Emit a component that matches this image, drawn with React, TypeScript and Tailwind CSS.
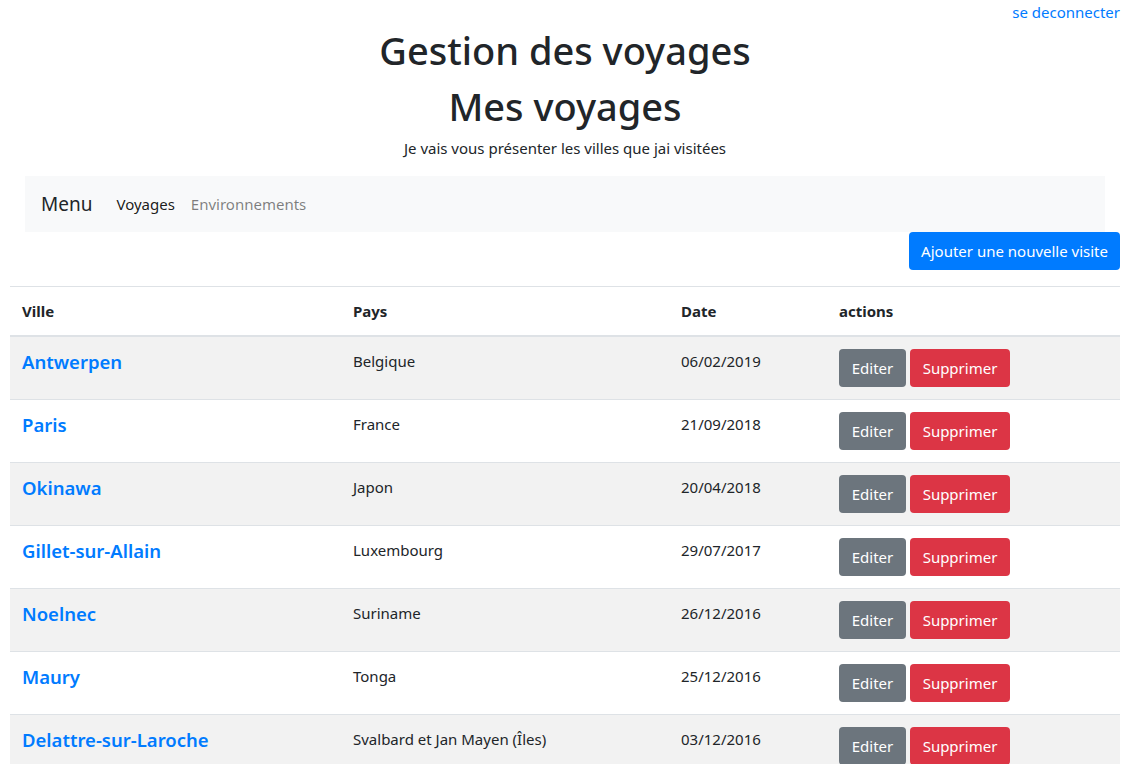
const voyages = [
  { ville: 'Antwerpen', pays: 'Belgique', date: '06/02/2019' },
  { ville: 'Paris', pays: 'France', date: '21/09/2018' },
  { ville: 'Okinawa', pays: 'Japon', date: '20/04/2018' },
  { ville: 'Gillet-sur-Allain', pays: 'Luxembourg', date: '29/07/2017' },
  { ville: 'Noelnec', pays: 'Suriname', date: '26/12/2016' },
  { ville: 'Maury', pays: 'Tonga', date: '25/12/2016' },
  { ville: 'Delattre-sur-Laroche', pays: 'Svalbard et Jan Mayen (Îles)', date: '03/12/2016' },
];

export default function App() {
  return (
    <div className="min-h-screen bg-white pl-[10px] pr-[14px] text-[#212529] font-['Noto_Sans','Open_Sans',sans-serif] text-[15px] leading-6">
      <div className="text-right">
        <a href="#" className="text-[#007bff] text-[15px]">se deconnecter</a>
      </div>
      <h1 className="text-center text-[38px] font-medium leading-[48px] mb-2 pt-[2px] h-[48px]">Gestion des voyages</h1>
      <h1 className="text-center text-[38px] font-medium leading-[48px] mb-2 pt-[2px] h-[48px]">Mes voyages</h1>
      <p className="text-center text-[15px] leading-6 mb-4">Je vais vous présenter les villes que jai visitées</p>

      <nav className="mx-[15px] h-14 bg-[#f8f9fa] flex items-center px-4">
        <span className="text-[19px] mr-6">Menu</span>
        <a href="#" className="text-[15px] text-black/90 mr-4">Voyages</a>
        <a href="#" className="text-[15px] text-black/50">Environnements</a>
      </nav>

      <div className="flex justify-end">
        <button className="h-[38px] px-3 rounded bg-[#007bff] text-white text-[15px]">Ajouter une nouvelle visite</button>
      </div>

      <table className="w-full mt-4 border-collapse text-left">
        <thead>
          <tr className="border-t border-[#dee2e6] border-b-2">
            <th className="w-[331px] px-3 py-3 font-bold text-[15px]">Ville</th>
            <th className="w-[328px] px-3 py-3 font-bold text-[15px]">Pays</th>
            <th className="w-[158px] px-3 py-3 font-bold text-[15px]">Date</th>
            <th className="px-3 py-3 font-bold text-[15px]">actions</th>
          </tr>
        </thead>
        <tbody>
          {voyages.map((v, i) => (
            <tr key={v.ville} className={`border-t border-[#dee2e6] ${i % 2 === 0 ? 'bg-[#f2f2f2]' : 'bg-white'}`}>
              <td className="px-3 py-3 align-top">
                <a href="#" className="text-[#007bff] text-[18.5px] font-semibold leading-[26px]">{v.ville}</a>
              </td>
              <td className="px-3 py-3 align-top text-[15px]">{v.pays}</td>
              <td className="px-3 py-3 align-top text-[15px]">{v.date}</td>
              <td className="px-3 py-3 align-top">
                <div className="flex gap-1">
                  <button className="h-[38px] w-[67px] rounded bg-[#6c757d] text-white text-[15px]">Editer</button>
                  <button className="h-[38px] w-[100px] rounded bg-[#dc3545] text-white text-[15px]">Supprimer</button>
                </div>
              </td>
            </tr>
          ))}
        </tbody>
      </table>
    </div>
  );
}
